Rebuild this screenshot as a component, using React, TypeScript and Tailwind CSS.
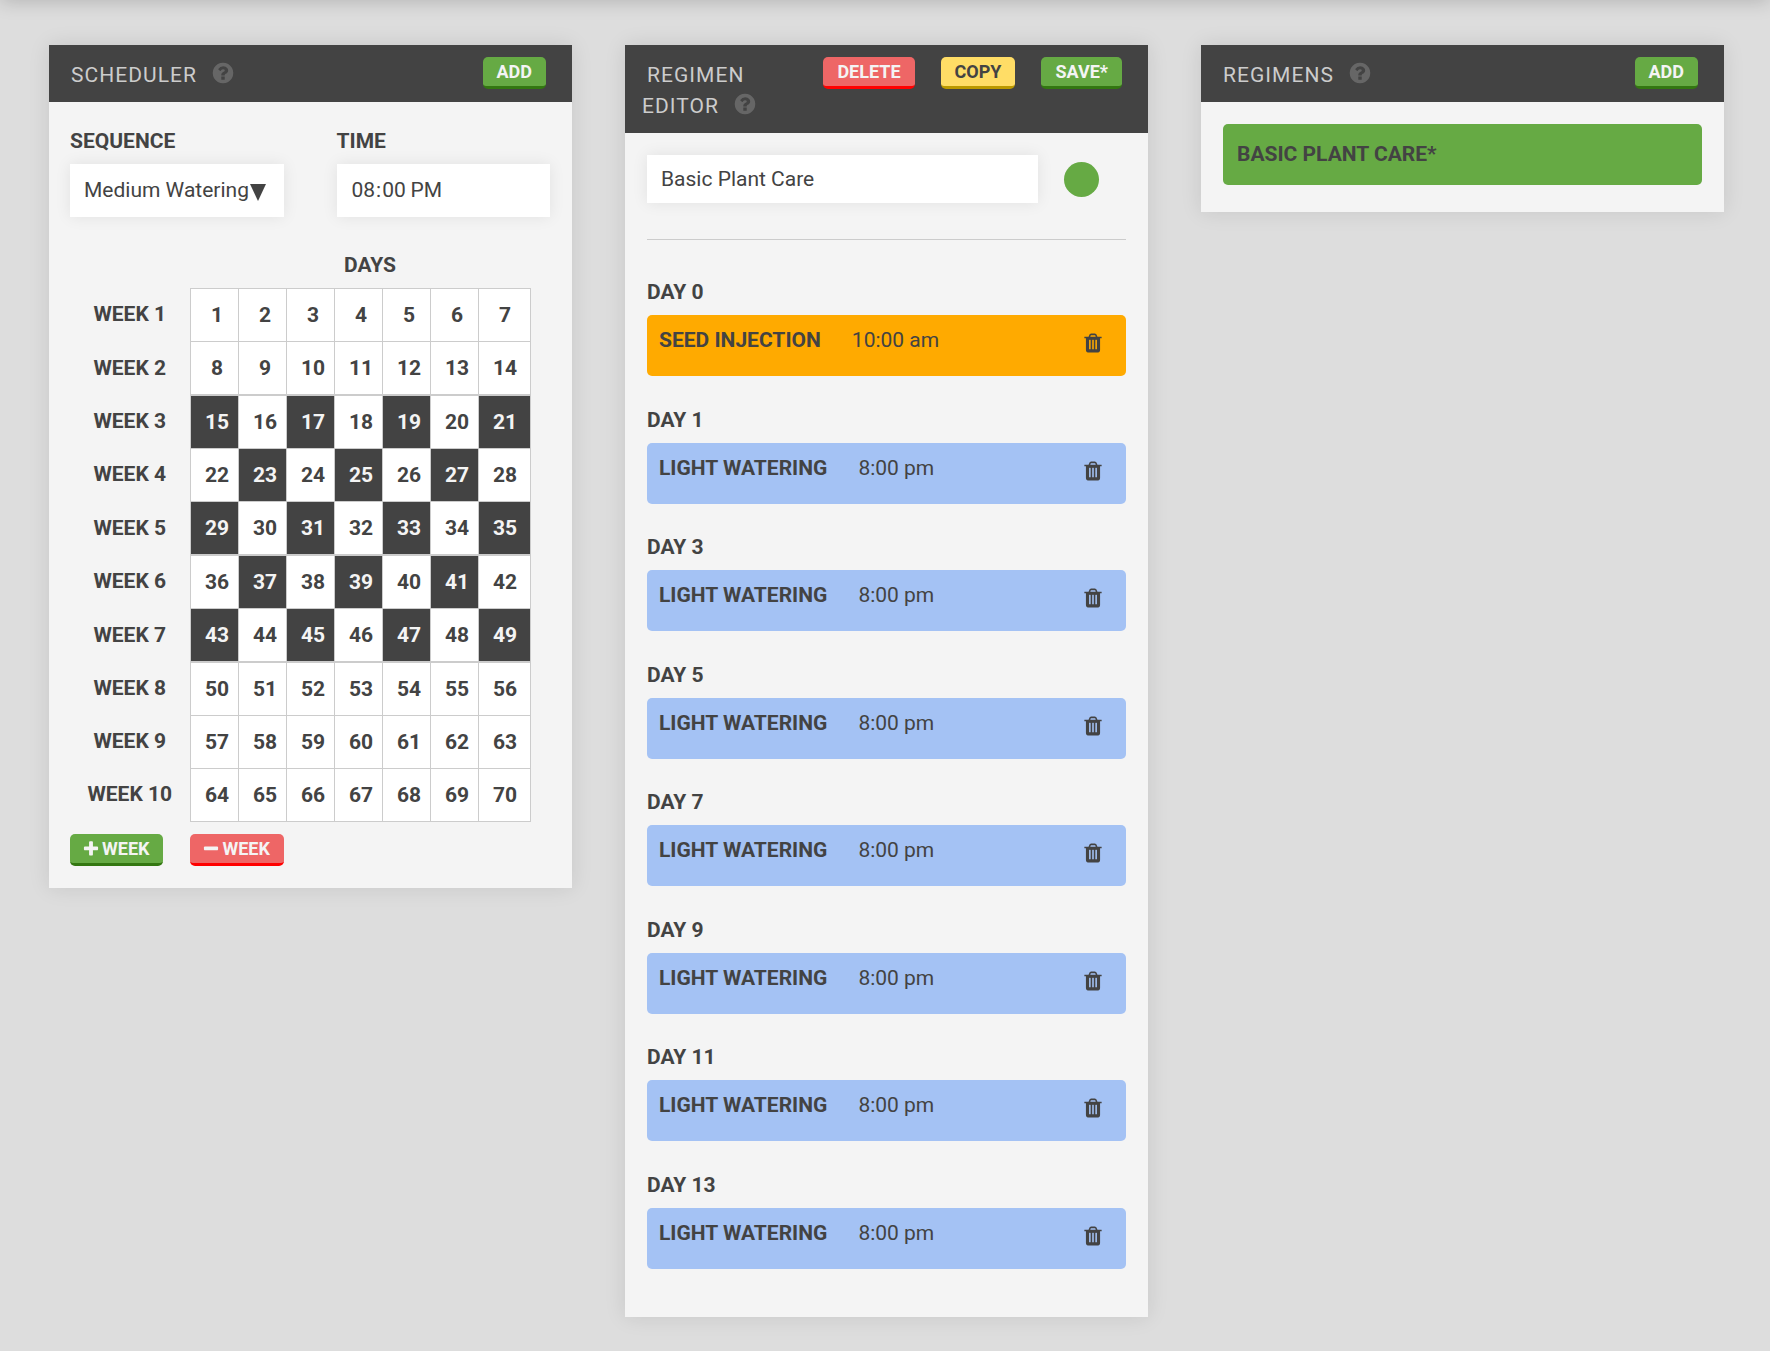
import { useState } from 'react';
import type { ReactNode } from 'react';
import { clsx } from 'clsx';

const WEEKS = 10;
const initialDays = [15, 17, 19, 21, 23, 25, 27, 29, 31, 33, 35, 37, 39, 41, 43, 45, 47, 49];

const regimenItems = [
  { day: 0, name: 'Seed Injection', time: '10:00 am', color: 'bg-[#ffaa00]' },
  { day: 1, name: 'Light Watering', time: '8:00 pm', color: 'bg-[#a4c2f4]' },
  { day: 3, name: 'Light Watering', time: '8:00 pm', color: 'bg-[#a4c2f4]' },
  { day: 5, name: 'Light Watering', time: '8:00 pm', color: 'bg-[#a4c2f4]' },
  { day: 7, name: 'Light Watering', time: '8:00 pm', color: 'bg-[#a4c2f4]' },
  { day: 9, name: 'Light Watering', time: '8:00 pm', color: 'bg-[#a4c2f4]' },
  { day: 11, name: 'Light Watering', time: '8:00 pm', color: 'bg-[#a4c2f4]' },
  { day: 13, name: 'Light Watering', time: '8:00 pm', color: 'bg-[#a4c2f4]' },
];

const icons = {
  help: 'M1024 1376v-192q0-14-9-23t-23-9h-192q-14 0-23 9t-9 23v192q0 14 9 23t23 9h192q14 0 23-9t9-23zm256-672q0-88-55.5-163t-138.5-116-170-41q-243 0-371 213-15 24 8 42l132 100q7 6 19 6 16 0 25-12 53-68 86-92 34-24 86-24 48 0 85.5 26t37.5 59q0 38-20 61t-68 45q-63 28-115.5 86.5t-52.5 125.5v36q0 14 9 23t23 9h192q14 0 23-9t9-23q0-19 21.5-49.5t54.5-49.5q32-18 49-28.5t46-35 44.5-48 28-60.5 12.5-81zm384 192q0 209-103 385.5t-279.5 279.5-385.5 103-385.5-103-279.5-279.5-103-385.5 103-385.5 279.5-279.5 385.5-103 385.5 103 279.5 279.5 103 385.5z',
  trash: 'M704 1376v-704q0-14-9-23t-23-9h-64q-14 0-23 9t-9 23v704q0 14 9 23t23 9h64q14 0 23-9t9-23zm256 0v-704q0-14-9-23t-23-9h-64q-14 0-23 9t-9 23v704q0 14 9 23t23 9h64q14 0 23-9t9-23zm256 0v-704q0-14-9-23t-23-9h-64q-14 0-23 9t-9 23v704q0 14 9 23t23 9h64q14 0 23-9t9-23zm-544-992h448l-48-117q-7-9-17-11h-317q-10 2-17 11zm928 32v64q0 14-9 23t-23 9h-96v948q0 83-47 143.5t-113 60.5h-832q-66 0-113-58.5t-47-141.5v-952h-96q-14 0-23-9t-9-23v-64q0-14 9-23t23-9h309l70-167q15-37 54-63t79-26h320q40 0 79 26t54 63l70 167h309q14 0 23 9t9 23z',
  plus: 'M1600 736v192q0 40-28 68t-68 28h-416v416q0 40-28 68t-68 28h-192q-40 0-68-28t-28-68v-416h-416q-40 0-68-28t-28-68v-192q0-40 28-68t68-28h416v-416q0-40 28-68t68-28h192q40 0 68 28t28 68v416h416q40 0 68 28t28 68z',
  minus: 'M1600 736v192q0 40-28 68t-68 28h-1216q-40 0-68-28t-28-68v-192q0-40 28-68t68-28h1216q40 0 68 28t28 68z',
};

function Icon({ name, className }: { name: keyof typeof icons; className: string }) {
  return (
    <svg viewBox="0 0 1792 1792" fill="currentColor" aria-hidden="true" className={className}>
      <path d={icons[name]} />
    </svg>
  );
}

const buttonColors = {
  green: 'bg-[#66aa44] border-[#337711] text-[#f4f4f4]',
  red: 'bg-[#ee6666] border-[#ff0000] text-[#f4f4f4]',
  yellow: 'bg-[#ffdd66] border-[#bb9900] text-[#434343]',
};

interface ButtonProps {
  color: keyof typeof buttonColors;
  onClick?: () => void;
  children: ReactNode;
}

function Button({ color, onClick, children }: ButtonProps) {
  return (
    <button
      type="button"
      onClick={onClick}
      className={clsx(
        'inline-flex h-8 items-center rounded-[5px] border-b-[3px] px-3.5 text-[18px] leading-none font-bold uppercase cursor-pointer',
        buttonColors[color],
      )}
    >
      {children}
    </button>
  );
}

interface PanelProps {
  title: string;
  actions: ReactNode;
  children: ReactNode;
}

function Panel({ title, actions, children }: PanelProps) {
  return (
    <section className="bg-[#f4f4f4] shadow-[0_0_20px_rgba(0,0,0,0.1)]">
      <header className="flex items-start justify-between bg-[#434343] pt-3 pr-[26px] pb-[11px] pl-[17px]">
        <h3 className="indent-[5px] pt-[3px] text-[21px] leading-[31px] tracking-wider text-[#cccccc] uppercase">
          {title}
          <button type="button" aria-label={`${title} help`} className="ml-3.5 indent-0 align-top text-[#666666]">
            <Icon name="help" className="mt-px size-6" />
          </button>
        </h3>
        <div className="flex h-8 shrink-0 gap-[26px]">{actions}</div>
      </header>
      {children}
    </section>
  );
}

function Scheduler() {
  const [weeks, setWeeks] = useState(WEEKS);
  const [days, setDays] = useState<number[]>(initialDays);

  const toggle = (day: number) =>
    setDays(days.includes(day) ? days.filter(d => d !== day) : [...days, day]);

  return (
    <Panel title="Scheduler" actions={<Button color="green">Add</Button>}>
      <div className="pr-[22px] pb-[22px] pl-[21px]">
        <div className="grid grid-cols-2 gap-x-[53px] pt-6">
          <div>
            <label htmlFor="sequence" className="block h-[38px] text-[21px] leading-[30px] font-bold uppercase">
              Sequence
            </label>
            <div className="relative">
              <select
                id="sequence"
                defaultValue="Medium Watering"
                className="block h-[53px] w-full appearance-none bg-white pl-3.5 text-[21px] shadow-[0_0_15px_rgba(0,0,0,0.08)] focus:outline-none"
              >
                <option>Light Watering</option>
                <option>Medium Watering</option>
                <option>Seed Injection</option>
              </select>
              <svg viewBox="0 0 16 17" aria-hidden="true" className="pointer-events-none absolute top-5 right-[18px] h-[17px] w-4">
                <path d="M0 0h16L8 17z" fill="#434343" />
              </svg>
            </div>
          </div>
          <div>
            <label htmlFor="time" className="block h-[38px] text-[21px] leading-[30px] font-bold uppercase">
              Time
            </label>
            <input
              id="time"
              type="time"
              defaultValue="20:00"
              className="block h-[53px] w-full bg-white pl-3.5 text-[21px] shadow-[0_0_15px_rgba(0,0,0,0.08)] focus:outline-none [&::-webkit-calendar-picker-indicator]:hidden"
            />
          </div>
        </div>

        {/* Day grid */}
        <table className="mt-[33px] w-full table-fixed border-collapse text-[21px] font-bold">
          <colgroup>
            <col className="w-[120px]" />
            <col span={6} className="w-12" />
            <col className="w-[52px]" />
            <col />
          </colgroup>
          <thead>
            <tr>
              <td />
              <th colSpan={8} className="h-[38px] pb-2 leading-[30px] uppercase">Days</th>
            </tr>
          </thead>
          <tbody>
            {Array.from({ length: weeks }, (_, week) => (
              <tr key={week} className="h-[53px]">
                <th className="p-0 uppercase">Week {week + 1}</th>
                {Array.from({ length: 7 }, (_, i) => {
                  const day = week * 7 + i + 1;
                  const selected = days.includes(day);
                  return (
                    <td
                      key={day}
                      className={clsx(
                        'border border-[#cccccc] p-0',
                        [2, 5, 7].includes(week) && 'border-t-2',
                        selected ? 'bg-[#434343] text-[#f4f4f4]' : 'bg-white',
                      )}
                    >
                      <button
                        type="button"
                        aria-pressed={selected}
                        onClick={() => toggle(day)}
                        className={clsx('block h-[52px] w-full cursor-pointer pt-0.5', i < 6 ? 'pl-1.5' : 'pl-0.5')}
                      >
                        {day}
                      </button>
                    </td>
                  );
                })}
              </tr>
            ))}
          </tbody>
        </table>

        <div className="flex gap-[27px] pt-3">
          <Button color="green" onClick={() => setWeeks(weeks + 1)}>
            <Icon name="plus" className="mr-0.5 -ml-0.5 size-[18px]" />
            Week
          </Button>
          <Button color="red" onClick={() => setWeeks(Math.max(1, weeks - 1))}>
            <Icon name="minus" className="mr-0.5 -ml-0.5 size-[18px]" />
            Week
          </Button>
        </div>
      </div>
    </Panel>
  );
}

function RegimenEditor() {
  return (
    <Panel
      title="Regimen Editor"
      actions={
        <>
          <Button color="red">Delete</Button>
          <Button color="yellow">Copy</Button>
          <Button color="green">Save*</Button>
        </>
      }
    >
      <div className="px-[22px] pt-[22px] pb-5">
        <div className="flex items-center">
          <input
            type="text"
            aria-label="Regimen name"
            defaultValue="Basic Plant Care"
            className="h-12 min-w-0 flex-1 bg-white px-3.5 text-[21px] shadow-[0_0_15px_rgba(0,0,0,0.08)] focus:outline-none"
          />
          <button type="button" aria-label="Color" className="mr-[27px] ml-[26px] size-[35px] rounded-full bg-[#66aa44]" />
        </div>
        <hr className="mt-9 mb-[37px] border-[#cccccc]" />

        <ul>
          {regimenItems.map(item => (
            <li key={item.day} className="odd:pb-[29px] even:pb-7">
              <h4 className="h-[38px] text-[21px] leading-[30px] font-bold uppercase">Day {item.day}</h4>
              <div className={clsx('flex h-[61px] items-start rounded-[5px] pt-2.5 pr-[22px] pl-3 text-[21px] leading-[30px]', item.color)}>
                <span className="font-bold uppercase">{item.name}</span>
                <span className="ml-[31px]">{item.time}</span>
                <button type="button" aria-label="Delete item" className="mt-[7px] ml-auto cursor-pointer">
                  <Icon name="trash" className="size-[22px]" />
                </button>
              </div>
            </li>
          ))}
        </ul>
      </div>
    </Panel>
  );
}

function Regimens() {
  return (
    <Panel title="Regimens" actions={<Button color="green">Add</Button>}>
      <div className="px-[22px] pt-[22px] pb-[27px]">
        <button
          type="button"
          className="block h-[61px] w-full cursor-pointer rounded-[5px] bg-[#66aa44] px-3.5 text-left text-[21px] font-bold uppercase"
        >
          Basic Plant Care*
        </button>
      </div>
    </Panel>
  );
}

export default function App() {
  return (
    <div className="flow-root min-h-screen bg-[#dddddd] font-['Roboto',sans-serif] text-[#434343]">
      <div className="-mt-5 h-5 shadow-[0_0_20px_rgba(0,0,0,0.22)]" />
      <main className="grid grid-cols-3 items-start gap-[53px] pt-[45px] pr-[46px] pb-8 pl-[49px]">
        <Scheduler />
        <RegimenEditor />
        <Regimens />
      </main>
    </div>
  );
}
